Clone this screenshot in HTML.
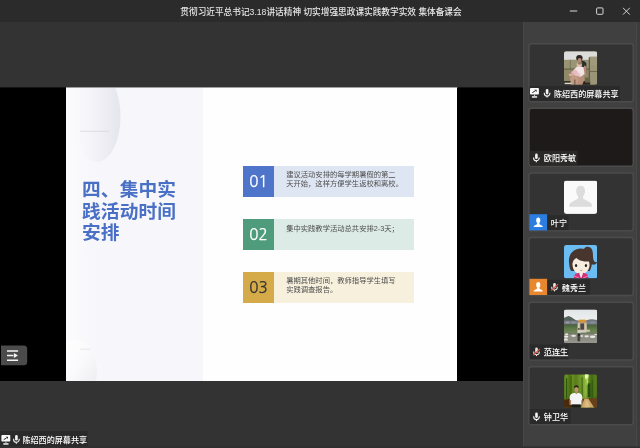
<!DOCTYPE html>
<html lang="zh-CN">
<head>
<meta charset="utf-8">
<title>集体备课会</title>
<style>
*{margin:0;padding:0;box-sizing:border-box}
html,body{width:640px;height:448px;overflow:hidden;background:#333333}
body{position:relative;font-family:"Liberation Sans","Noto Sans CJK SC",sans-serif;color:#fff}
.abs{position:absolute}
#titlebar{left:0;top:0;width:640px;height:22px;background:#2b2b2b}
#title{left:0.7px;top:0.7px;width:640px;height:22px;line-height:22px;text-align:center;font-size:8.66px;color:#e6e6e6;white-space:pre;font-weight:500}
#stage{left:0;top:87.5px;width:522.6px;height:293.5px;background:#000}
#slide{left:66px;top:87.5px;width:391.3px;height:293.5px;background:#fefefe;overflow:hidden}
#slide .leftp{left:0;top:0;width:137px;height:100%;background:linear-gradient(90deg,#fbfbfd 0,#f6f6fb 30%,#f6f6fb 100%)}
#slide h1{left:16.3px;top:91.3px;font-size:18.7px;line-height:21.7px;font-weight:700;color:#4a70c6;white-space:nowrap;letter-spacing:0.15px}
.num{width:31px;height:30.8px;font-family:"NanumGothic","Liberation Sans",sans-serif;font-weight:400;font-size:15.2px;line-height:31.6px;-webkit-text-stroke:0.25px currentColor;text-align:center;color:#fff}
.bar{height:30.8px;width:140.2px;font-size:7.3px;line-height:8.5px;color:#4e4e4e;padding:5.2px 0 0 12.2px;white-space:nowrap}
#panel{left:523px;top:22px;width:117px;height:426px;background:#404040;border-left:1px solid #484848}
#title,#slide h1,.num,.bar{will-change:transform}
#ov{left:0;top:0}
#ov text{font-family:"Liberation Sans","Noto Sans CJK SC",sans-serif;font-size:8.1px;font-weight:500;fill:#fff}
</style>
</head>
<body>
<div id="titlebar" class="abs"></div>
<div id="title" class="abs">贯彻习近平总书记3.18讲话精神 切实增强思政课实践教学实效 集体备课会</div>
<svg class="abs" style="left:560px;top:0" width="80" height="22" viewBox="0 0 80 22" fill="none" stroke="#d8d8d8" stroke-width="1">
  <path d="M9.8 11H17.2"/>
  <rect x="36.6" y="7.9" width="6.4" height="6.4" rx="1"/>
  <path d="M63 7.8l6.8 6.8M69.8 7.8L63 14.6"/>
</svg>

<div id="stage" class="abs"></div>
<div id="slide" class="abs">
  <div class="leftp abs"></div>
  <svg class="abs" style="left:0;top:0" width="137" height="293.5" viewBox="0 0 137 293.5">
    <defs>
      <linearGradient id="e1" x1="0" x2="1" y1="0" y2="0"><stop offset="0" stop-color="#fafafd"/><stop offset="0.3" stop-color="#f6f6fa"/><stop offset="1" stop-color="#e5e5ed"/></linearGradient>
      <linearGradient id="e2" x1="0" x2="1" y1="0" y2="1"><stop offset="0" stop-color="#ffffff"/><stop offset="0.5" stop-color="#fafafc"/><stop offset="1" stop-color="#e7e7ee"/></linearGradient>
    </defs>
    <ellipse cx="31" cy="28.5" rx="23.5" ry="45.5" fill="url(#e1)"/>
    <path d="M14 43.3H43" stroke="#d6d6dc" stroke-width="0.8"/>
    <ellipse cx="9" cy="283" rx="22" ry="31" fill="url(#e2)"/>
    <path d="M14 261.2H24.5" stroke="#dcdce0" stroke-width="0.7"/>
  </svg>
  <h1 class="abs">四、集中实<br>践活动时间<br>安排</h1>

  <div class="num abs" style="left:177.3px;top:78.5px;background:#4f75cb">01</div>
  <div class="bar abs" style="left:208.1px;top:78.5px;background:#dfe6f3">建议活动安排的每学期暑假的第二<br>天开始，这样方便学生返校和离校。</div>

  <div class="num abs" style="left:177.3px;top:131.5px;background:#4f9c7c">02</div>
  <div class="bar abs" style="left:208.1px;top:131.5px;background:#dcebe5;padding-top:6.1px">集中实践教学活动总共安排2-3天；</div>

  <div class="num abs" style="left:177.3px;top:184.7px;background:#d5ab4a;color:#333">03</div>
  <div class="bar abs" style="left:208.1px;top:184.7px;background:#f6f0dd">暑期其他时间，教师指导学生填写<br>实践调查报告。</div>
</div>

<div id="panel" class="abs"></div>
<div class="abs" style="left:636px;top:22px;width:4px;height:426px;background:#3c3c3c;border-left:1px solid #474747"></div>
<svg id="ov" class="abs" width="640" height="448" viewBox="0 0 640 448"><rect x="0" y="87.4" width="522.6" height="0.6" fill="#000"/><rect x="66" y="87.4" width="137" height="0.6" fill="#f8f8fc"/><rect x="203" y="87.4" width="254.3" height="0.6" fill="#fefefe"/>
<rect x="528.95" y="43.75" width="104.3" height="57.9" rx="2.6" fill="#333333" stroke="#4b4b4b" stroke-width="1.5"/>
<clipPath id="ac0"><rect x="564" y="51.2" width="33.2" height="33.5" rx="2.3"/></clipPath><g clip-path="url(#ac0)"><svg x="564" y="51.2" width="33.2" height="33.5" viewBox="0 0 33 33" preserveAspectRatio="none"><defs><filter id="b1" x="-20%" y="-20%" width="140%" height="140%"><feGaussianBlur stdDeviation="0.75"/></filter></defs>
<rect width="33" height="33" fill="#8d8768"/><g filter="url(#b1)">
<rect x="-2" y="-2" width="37" height="10.5" fill="#dcdcda"/>
<path d="M-1 9.2l7-0.8 6 0.3 14 0.3v9h-27z" fill="#9a9476"/>
<path d="M6.5 9c-0.5 3-0.5 6 0 9" stroke="#6f694c" stroke-width="0.7" fill="none"/>
<rect x="-1" y="17.5" width="27" height="11" fill="#8f8969"/>
<rect x="-1" y="17" width="27" height="1.2" fill="#6a6448"/>
<rect x="25.4" y="5.3" width="9" height="9" fill="#a09a7c"/>
<rect x="25.4" y="13.5" width="9" height="20" fill="#9c9678"/>
<rect x="24.6" y="6" width="1.2" height="27" fill="#5f5a42"/>
<rect x="25.4" y="19.5" width="9" height="1" fill="#6f694c"/>
<rect x="-1" y="29.5" width="27" height="5" fill="#25241c"/>
<rect x="21" y="26" width="5" height="5" fill="#6a6448"/>
<ellipse cx="15.3" cy="6.8" rx="3.2" ry="3" fill="#2a2521"/>
<ellipse cx="15.5" cy="8.8" rx="1.9" ry="2" fill="#b48a74"/>
<path d="M17.2 9.2c2 0 4.5 1 5 3l0.3 10-4.5 1.5z" fill="#2b332f"/>
<path d="M20 14l2.3 1 0.2 8-3.5 2z" fill="#b58c76"/>
<ellipse cx="15.2" cy="13.3" rx="2.6" ry="2.4" fill="#dcbba8"/>
<ellipse cx="15.8" cy="11.8" rx="2.2" ry="1.2" fill="#9a7a60"/>
<path d="M9.5 18.5l3.5-3.5 6.5 0.5 0.8 7-5.3 4.5-6.5-2z" fill="#f0e4e6"/>
<path d="M7 20.5l4.5-2.5 3 3-5.5 4z" fill="#e7b9c0"/>
<path d="M11.5 21l5 1-1 4-4.5 0.5z" fill="#e9c3c8"/>
<path d="M4.5 22.5l5-1 1 2.5-5 1z" fill="#d8ab98"/>
<path d="M6 26l4-2.5 5.5 1.5 0.5 4-2 6h-7z" fill="#c19a84"/>
<path d="M14.5 26l5-2 1 3.5-3 7h-4.5z" fill="#b88f79"/>
<path d="M10.8 28v6" stroke="#5a4638" stroke-width="0.9"/>
<rect x="0.5" y="31" width="7" height="1.5" fill="#d8d8cc"/>
</g></svg></g>
<rect x="529.7" y="86.1" width="90.3" height="14.8" fill="#2a2a2a"/>
<g transform="translate(530,88)"><rect x="0" y="0" width="8.9" height="6.6" rx="0.8" fill="#f8f8f8"/><path d="M2.3 4.7L5.2 2.9" stroke="#2a2a2a" stroke-width="1" fill="none"/><path d="M4.3 1.8H6.6V4.1Z" fill="#2a2a2a"/><path d="M1.9 8.95H7.1" stroke="#f4f4f4" stroke-width="1.5"/><path d="M4.5 6.6v1.7" stroke="#bdbdbd" stroke-width="1.1"/></g>
<g transform="translate(543.6,88.9)"><rect x="2.2" y="0" width="2.6" height="5.5" rx="1.3" fill="#f4f4f4"/><path d="M0.7 3.8v0.6a2.8 2.8 0 0 0 5.6 0v-0.6" fill="none" stroke="#f4f4f4" stroke-width="1.1"/><path d="M3.5 7.2v1.5" stroke="#f4f4f4" stroke-width="1.1"/></g>
<text x="553.9" y="96.8">陈绍西的屏幕共享</text>
<rect x="528.95" y="108.35" width="104.3" height="57.9" rx="2.6" fill="#1e1a1a" stroke="#4b4b4b" stroke-width="1.5"/>
<rect x="529.7" y="150.7" width="47.8" height="14.8" fill="#2b2828"/>
<g transform="translate(532.9,153.6)"><rect x="2.2" y="0" width="2.6" height="5.5" rx="1.3" fill="#f4f4f4"/><path d="M0.7 3.8v0.6a2.8 2.8 0 0 0 5.6 0v-0.6" fill="none" stroke="#f4f4f4" stroke-width="1.1"/><path d="M3.5 7.2v1.5" stroke="#f4f4f4" stroke-width="1.1"/></g>
<text x="543.8" y="161.4">欧阳秀敏</text>
<rect x="528.95" y="172.95" width="104.3" height="57.9" rx="2.6" fill="#333333" stroke="#4b4b4b" stroke-width="1.5"/>
<clipPath id="ac2"><rect x="564" y="180.4" width="33.2" height="33.5" rx="2.3"/></clipPath><g clip-path="url(#ac2)"><svg x="564" y="180.4" width="33.2" height="33.5" viewBox="0 0 33 33" preserveAspectRatio="none"><rect width="33" height="33" fill="#fafafa"/>
<path d="M16.5 5.3c2.7 0 4.4 2 4.4 4.8 0 2.3-0.9 4.3-1.9 5.4v2.4l6.6 3.6c1.3 0.7 2.1 1.7 2.1 3.1v1.3h-22.4v-1.3c0-1.4 0.8-2.4 2.1-3.1l6.6-3.6v-2.4c-1-1.1-1.9-3.1-1.9-5.4 0-2.8 1.7-4.8 4.4-4.8z" fill="#dcdcdc"/></svg></g>
<rect x="547" y="215.3" width="21.5" height="14.8" fill="#2a2a2a"/>
<rect x="529.4" y="214.2" width="17.7" height="16.2" fill="#2b7de0"/><g transform="translate(529.4,214.3)"><ellipse cx="8.85" cy="6" rx="2.05" ry="2.85" fill="#fff"/><path d="M4.3 12.7c0-1.5 1.5-2 3-2.5l0.6-1.6h1.9l0.6 1.6c1.5 0.5 3 1 3 2.5z" fill="#fff"/></g>
<text x="550.8" y="226">叶宁</text>
<rect x="528.95" y="237.55" width="104.3" height="57.9" rx="2.6" fill="#333333" stroke="#4b4b4b" stroke-width="1.5"/>
<clipPath id="ac3"><rect x="564" y="245" width="33.2" height="33.5" rx="2.3"/></clipPath><g clip-path="url(#ac3)"><svg x="564" y="245" width="33.2" height="33.5" viewBox="0 0 33 33" preserveAspectRatio="none"><defs><filter id="b4"><feGaussianBlur stdDeviation="0.3"/></filter></defs>
<rect width="33" height="33" fill="#6cbcf4"/><g filter="url(#b4)">
<path d="M20 3.5c2-2.6 6.5-2.2 8 1.5 1.5 3.5 0 8 2 11 0.8 1.2 2.5 1.2 3 0.5-0.5 2.5-3.5 3.5-5.5 2.5-1.5-0.8-2-2.5-2-4z" fill="#47362f"/>
<path d="M5 17c-1-7 4-13.5 11.5-13.5 7.5 0 12 5.5 11.5 12.5-0.3 4-1 7.5-2.5 9.5h-18.5c-1.5-2-1.8-5.5-2-8.5z" fill="#47362f"/>
<path d="M8.3 20c0-3.6 1.3-6 4-7.3 2.2 2.3 7.2 3.8 12.5 3.6 0.5 1.2 0.6 2.2 0.6 3.5-0.3 5.5-3.8 8.7-8.4 8.7-4.7 0-8.5-3.5-8.5-9z" fill="#f6ecdf"/>
<ellipse cx="12" cy="20.2" rx="1.15" ry="1.5" fill="#2a2422"/><ellipse cx="21.8" cy="20.2" rx="1.15" ry="1.5" fill="#2a2422"/>
<path d="M16 24.8c0.7 0.5 1.5 0.5 2.2 0" stroke="#a0524a" stroke-width="0.6" fill="none"/>
<path d="M9.5 33l1.5-4.5 4-1.2 2 2.5 2-2.5 4 1.2 1.5 4.5z" fill="#d62d78"/>
<path d="M15 27.5l2 5.5 2-5.5-2 1z" fill="#fbeff0"/>
<path d="M10.5 30.5l5 2.5M23.5 30.5l-5 2.5" stroke="#f7a9c9" stroke-width="0.7"/>
</g></svg></g>
<rect x="547" y="279.9" width="43" height="14.8" fill="#2a2a2a"/>
<rect x="529.4" y="278.8" width="17.7" height="16.2" fill="#e8872d"/><g transform="translate(529.4,278.9)"><ellipse cx="8.85" cy="6" rx="2.05" ry="2.85" fill="#fff"/><path d="M4.3 12.7c0-1.5 1.5-2 3-2.5l0.6-1.6h1.9l0.6 1.6c1.5 0.5 3 1 3 2.5z" fill="#fff"/></g>
<g transform="translate(551,282.9)"><rect x="2.2" y="0" width="2.6" height="5.5" rx="1.3" fill="#e6e6e6"/><path d="M0.7 3.8v0.6a2.8 2.8 0 0 0 5.6 0v-0.6" fill="none" stroke="#e6e6e6" stroke-width="1.05"/><path d="M3.5 7.2v1.3" stroke="#e6e6e6" stroke-width="1.05"/><path d="M0.1 7.7L7 1.2" stroke="#ea4a3e" stroke-width="1.1"/></g>
<text x="561.8" y="290.6">魏秀兰</text>
<rect x="528.95" y="302.15" width="104.3" height="57.9" rx="2.6" fill="#333333" stroke="#4b4b4b" stroke-width="1.5"/>
<clipPath id="ac4"><rect x="564" y="309.6" width="33.2" height="33.5" rx="2.3"/></clipPath><g clip-path="url(#ac4)"><svg x="564" y="309.6" width="33.2" height="33.5" viewBox="0 0 33 33" preserveAspectRatio="none"><defs><filter id="b5" x="-20%" y="-20%" width="140%" height="140%"><feGaussianBlur stdDeviation="0.7"/></filter>
<linearGradient id="s5" x1="0" x2="0" y1="0" y2="1"><stop offset="0" stop-color="#dfe5e7"/><stop offset="1" stop-color="#eef0ee"/></linearGradient>
<linearGradient id="t5" x1="0" x2="0" y1="0" y2="1"><stop offset="0" stop-color="#4a5f40"/><stop offset="0.5" stop-color="#5f7a48"/><stop offset="1" stop-color="#74895c"/></linearGradient></defs>
<rect width="33" height="33" fill="#e6eaea"/><g filter="url(#b5)">
<rect x="-2" y="-2" width="37" height="14" fill="url(#s5)"/>
<path d="M-1 8.6L2 7.2 4.5 6.2 7 7.2 9.5 9 12 10.4 15 11.2 -1 12z" fill="#53625a"/>
<path d="M21 11L25 9.8 28 9.5 31 9.9 34 10.3V12.5H21z" fill="#69786f"/>
<rect x="-1" y="10.9" width="35" height="4.8" fill="#797d89"/>
<rect x="2" y="12" width="3" height="1.6" fill="#9a9ca6"/><rect x="7.5" y="11.6" width="4" height="2" fill="#8c8f9c"/><rect x="26" y="11.8" width="5" height="1.8" fill="#8a8d99"/>
<rect x="-1" y="14.3" width="14.8" height="9" fill="url(#t5)"/>
<rect x="22.3" y="14.6" width="12" height="8.6" fill="url(#t5)"/>
<rect x="13.6" y="12.3" width="9" height="8.5" fill="#b3a88e"/>
<rect x="14.6" y="10.2" width="7.4" height="2.3" fill="#e2902a"/>
<rect x="15" y="9.9" width="6.5" height="0.8" fill="#c8a23a"/>
<rect x="16.3" y="13.6" width="3.6" height="6.5" fill="#4c4842"/>
<rect x="13.8" y="13.5" width="1.6" height="6.5" fill="#d6cfba"/>
<rect x="20.6" y="13.5" width="1.5" height="6.5" fill="#d2cab4"/>
<rect x="16.5" y="19.8" width="9.2" height="2" fill="#cdc6b2"/>
<rect x="-1" y="22.8" width="35" height="12" fill="#8d8d85"/>
<rect x="-1" y="22.6" width="35" height="1.6" fill="#6f7c60"/>
<ellipse cx="2.6" cy="24.2" rx="1.6" ry="0.9" fill="#e4e4de"/>
<ellipse cx="2.2" cy="26.6" rx="2" ry="1.2" fill="#eeeeea"/><ellipse cx="9.5" cy="25.8" rx="2.4" ry="1.1" fill="#e6e6e0"/>
<ellipse cx="17.5" cy="26" rx="1.5" ry="0.9" fill="#deded8"/>
<ellipse cx="22.5" cy="26.3" rx="2.2" ry="1.1" fill="#e6e6e0"/><ellipse cx="28.5" cy="26.8" rx="2.8" ry="1.2" fill="#ecece6"/>
<ellipse cx="1.8" cy="29.8" rx="2.2" ry="1.5" fill="#e2e2da"/>
<ellipse cx="31.5" cy="24.5" rx="1.5" ry="0.8" fill="#dcdcd4"/>
<rect x="-1" y="30.5" width="35" height="4" fill="#94948c"/>
<ellipse cx="14.8" cy="19.2" rx="0.95" ry="1.05" fill="#5a463c"/>
<rect x="13.4" y="19.8" width="2.9" height="4.2" rx="1" fill="#d2ccc2"/>
<rect x="13.5" y="23.3" width="2.6" height="7.8" rx="0.7" fill="#2b2b28"/>
<rect x="14.7" y="26" width="0.5" height="5" fill="#8d8d85"/>
</g></svg></g>
<rect x="529.7" y="344.5" width="38.9" height="14.8" fill="#2a2a2a"/>
<g transform="translate(533,347.6)"><rect x="2.2" y="0" width="2.6" height="5.5" rx="1.3" fill="#e6e6e6"/><path d="M0.7 3.8v0.6a2.8 2.8 0 0 0 5.6 0v-0.6" fill="none" stroke="#e6e6e6" stroke-width="1.05"/><path d="M3.5 7.2v1.3" stroke="#e6e6e6" stroke-width="1.05"/><path d="M0.1 7.7L7 1.2" stroke="#ea4a3e" stroke-width="1.1"/></g>
<text x="543.8" y="355.2">范连生</text>
<rect x="544" y="355.4" width="24.2" height="0.8" fill="#e8e8e8"/>
<rect x="528.95" y="366.75" width="104.3" height="57.9" rx="2.6" fill="#333333" stroke="#4b4b4b" stroke-width="1.5"/>
<clipPath id="ac5"><rect x="564" y="374.2" width="33.2" height="33.5" rx="2.3"/></clipPath><g clip-path="url(#ac5)"><svg x="564" y="374.2" width="33.2" height="33.5" viewBox="0 0 33 33" preserveAspectRatio="none"><defs><filter id="b6" x="-20%" y="-20%" width="140%" height="140%"><feGaussianBlur stdDeviation="0.6"/></filter>
<linearGradient id="g6" x1="0" x2="1" y1="0" y2="0"><stop offset="0" stop-color="#557a1a"/><stop offset="0.08" stop-color="#6f9426"/><stop offset="0.16" stop-color="#4e7416"/><stop offset="0.26" stop-color="#6a9024"/><stop offset="0.36" stop-color="#587e1a"/><stop offset="0.46" stop-color="#6c9426"/><stop offset="0.56" stop-color="#7aa22e"/><stop offset="0.66" stop-color="#98c244"/><stop offset="0.74" stop-color="#5e8a20"/><stop offset="0.84" stop-color="#426a14"/><stop offset="0.93" stop-color="#587f1c"/><stop offset="1" stop-color="#4c7418"/></linearGradient>
<linearGradient id="d6" x1="0" x2="0" y1="0" y2="1"><stop offset="0" stop-color="#000" stop-opacity="0"/><stop offset="0.6" stop-color="#000" stop-opacity="0.05"/><stop offset="1" stop-color="#1a1400" stop-opacity="0.35"/></linearGradient></defs>
<rect width="33" height="33" fill="url(#g6)"/><rect width="33" height="33" fill="url(#d6)"/><g filter="url(#b6)">
<ellipse cx="22.6" cy="1.5" rx="1.8" ry="3.6" fill="#f0fab8"/>
<ellipse cx="23.2" cy="7" rx="0.9" ry="4" fill="#b4dc58"/>
<rect x="23.6" y="9" width="2.8" height="13.5" fill="#2c4e0e"/>
<rect x="27.5" y="6" width="1.2" height="17" fill="#345a10"/>
<rect x="2" y="4" width="1.2" height="20" fill="#2f560c"/>
<rect x="6.5" y="2" width="1" height="18" fill="#33590e"/>
<rect x="17.5" y="3" width="1" height="19" fill="#3a6210"/>
<path d="M-1 25.5l8-1.5h6v10h-14z" fill="#4a2c10"/>
<path d="M17 24.5l17-1v11h-17z" fill="#66401a"/>
<path d="M20.3 24.2l4 0 6.5 10h-14.5z" fill="#cda96a"/>
<path d="M21.5 26l2 0 3 8h-6.5z" fill="#dcbc80"/>
<ellipse cx="12.3" cy="12.6" rx="2.3" ry="1.6" fill="#2a2018"/>
<ellipse cx="12.3" cy="15.3" rx="2" ry="2.6" fill="#c09470"/>
<rect x="11.3" y="17" width="2" height="2" fill="#b88a68"/>
<path d="M5.6 23c0-3.2 2.6-4.4 5.2-4.7l1.5 1.2 1.5-1.2c2.6 0.3 4.4 1.5 4.4 4.7l-0.6 7h-11.4z" fill="#f4f4f4"/>
<rect x="5.4" y="25.5" width="1.6" height="4.5" fill="#b08464"/><rect x="17.2" y="25.5" width="1.2" height="4" fill="#b08464"/>
<rect x="7.6" y="29.8" width="9" height="5" fill="#1c1c1c"/>
</g></svg></g>
<rect x="529.7" y="409.1" width="40.8" height="14.8" fill="#2a2a2a"/>
<g transform="translate(533,412.4)"><rect x="2.2" y="0" width="2.6" height="5.5" rx="1.3" fill="#f4f4f4"/><path d="M0.7 3.8v0.6a2.8 2.8 0 0 0 5.6 0v-0.6" fill="none" stroke="#f4f4f4" stroke-width="1.1"/><path d="M3.5 7.2v1.5" stroke="#f4f4f4" stroke-width="1.1"/></g>
<text x="543.8" y="419.8">钟卫华</text>
<path d="M1 345.5H23.7a3.5 3.5 0 0 1 3.5 3.5V361.8a3.5 3.5 0 0 1 -3.5 3.5H1Z" fill="#4b4b4b"/><path d="M7 350.9H18.1M7 360.3H18.1M7 355.6H13.4" stroke="#f6f6f6" stroke-width="1.5" fill="none"/><path d="M13.9 353.1L17.9 355.6 13.9 358.1Z" fill="#f6f6f6"/>
<rect x="0" y="431" width="87.5" height="15.6" fill="#2a2a2a"/><g transform="translate(1.4,435)"><rect x="0" y="0" width="8.9" height="6.6" rx="0.8" fill="#f8f8f8"/><path d="M2.3 4.7L5.2 2.9" stroke="#2a2a2a" stroke-width="1" fill="none"/><path d="M4.3 1.8H6.6V4.1Z" fill="#2a2a2a"/><path d="M1.9 8.95H7.1" stroke="#f4f4f4" stroke-width="1.5"/><path d="M4.5 6.6v1.7" stroke="#bdbdbd" stroke-width="1.1"/></g><g transform="translate(12.9,435)"><rect x="2.2" y="0" width="2.6" height="5.5" rx="1.3" fill="#f4f4f4"/><path d="M0.7 3.8v0.6a2.8 2.8 0 0 0 5.6 0v-0.6" fill="none" stroke="#f4f4f4" stroke-width="1.1"/><path d="M3.5 7.2v1.5" stroke="#f4f4f4" stroke-width="1.1"/></g><text x="22.4" y="442.6">陈绍西的屏幕共享</text>
<rect x="0" y="446.5" width="640" height="1.5" fill="#2f2f2f"/></svg>
</body>
</html>
